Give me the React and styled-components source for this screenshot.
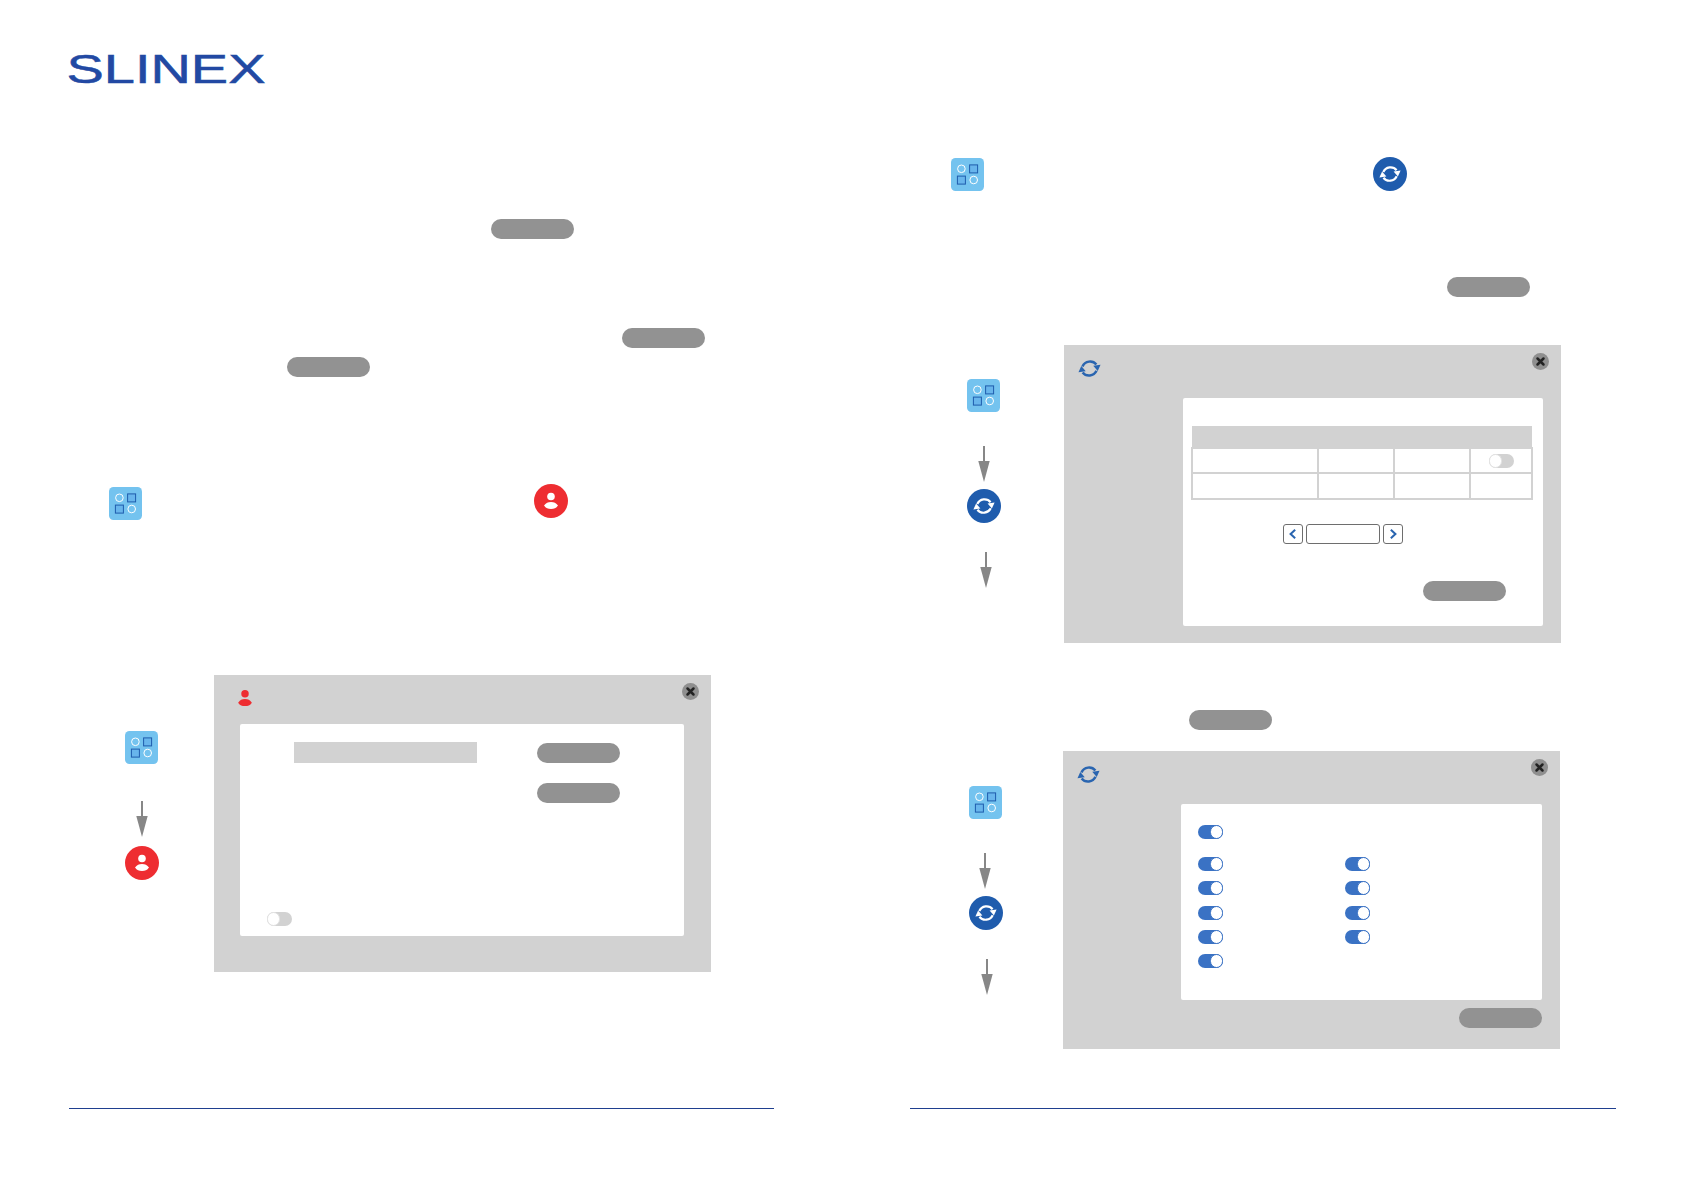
import React from 'react'
import styled, { createGlobalStyle } from 'styled-components'

const GlobalStyle = createGlobalStyle`
  html, body {
    margin: 0;
    background: #fff;
    font-family: 'Liberation Sans', Arial, sans-serif;
  }
`

const AppsIcon = ({ top = 0 }) => (
  <AppsSvg viewBox="0 0 33 33" $top={top}>
    <rect width="33" height="33" rx="4.5" fill="#74c3ef" />
    <circle cx="10.4" cy="10.8" r="3.8" fill="none" stroke="#fff" strokeWidth="1" />
    <rect x="18.6" y="6.9" width="8" height="8" fill="#68b5ec" stroke="#1f5cad" strokeWidth="1" />
    <rect x="6.4" y="18.1" width="8" height="8" fill="#68b5ec" stroke="#1f5cad" strokeWidth="1" />
    <circle cx="22.7" cy="22" r="3.8" fill="none" stroke="#fff" strokeWidth="1" />
  </AppsSvg>
)

const Person = ({ color }) => (
  <>
    <circle cx="17" cy="12.5" r="3.8" fill={color} />
    <path d="M10 21.6 C11.8 18.8 14 17.9 17 17.9 C20 17.9 22.2 18.8 24 21.6 C22.2 24.3 20 25 17 25 C14 25 11.8 24.3 10 21.6 Z" fill={color} />
  </>
)

const UserBadge = () => (
  <RoundSvg viewBox="0 0 34 34">
    <circle cx="17" cy="17" r="17" fill="#ee2d31" />
    <Person color="#fff" />
  </RoundSvg>
)

const syncArcs = (color, width) => (
  <>
    <path d="M5.3 10 A7.9 7.9 0 0 1 18.6 8.2" fill="none" stroke={color} strokeWidth={width} />
    <path d="M15.6 9.4 L22.6 8.4 L19.9 14.4 Z" fill={color} />
    <path d="M18.7 14.2 A7.9 7.9 0 0 1 5.4 15.8" fill="none" stroke={color} strokeWidth={width} />
    <path d="M8.4 14.6 L1.4 15.6 L4.1 9.6 Z" fill={color} />
  </>
)

const SyncBadge = () => (
  <RoundSvg viewBox="0 0 34 34">
    <circle cx="17" cy="17" r="17" fill="#1f5cad" />
    <g transform="translate(5 5)">{syncArcs('#fff', 2.2)}</g>
  </RoundSvg>
)

const SyncMark = () => (
  <SyncSvg viewBox="0 0 24 24">{syncArcs('#2a65b0', 2.4)}</SyncSvg>
)

const UserMark = () => (
  <UserSvg viewBox="10 8.7 14 16.3">
    <Person color="#ee2d31" />
  </UserSvg>
)

const CloseButton = ({ top, right }) => (
  <CloseSvg viewBox="0 0 17 17" $top={top} $right={right}>
    <circle cx="8.5" cy="8.5" r="8.5" fill="#8f8f8f" />
    <path d="M5.5 5.5 L11.5 11.5 M11.5 5.5 L5.5 11.5" stroke="#222" strokeWidth="2.5" strokeLinecap="round" />
  </CloseSvg>
)

const Arrow = ({ top, left }) => (
  <ArrowSvg viewBox="0 0 12 36" $top={top} $left={left}>
    <path d="M6 0 V16" stroke="#878787" strokeWidth="2" />
    <path d="M0.3 15 H11.7 L6 36 Z" fill="#878787" />
  </ArrowSvg>
)

const Chevron = ({ d }) => (
  <ChevronSvg viewBox="0 0 10 10">
    <path d={d} fill="none" stroke="#2a65b0" strokeWidth="1.7" />
  </ChevronSvg>
)

const App = () => (
  <>
    <GlobalStyle />
    <Sheet>
      <Page>
        <LogoMark viewBox="0 0 197 30">
          <LogoText x="-1.5" y="29" textLength="199" lengthAdjust="spacingAndGlyphs">SLINEX</LogoText>
        </LogoMark>

        <Pill $top={135} $left={491} />
        <Pill $top={89} $left={622} />
        <Pill $top={9} $left={287} />

        <IconRow $top={107} $left={109} $gap={392}>
          <AppsIcon top={3} />
          <UserBadge />
        </IconRow>

        <Figure $top={155}>
          <SideSteps $left={125} $top={56}>
            <AppsIcon />
            <Arrow top={37} left={11} />
            <StepBadge $top={9}><UserBadge /></StepBadge>
          </SideSteps>
          <Dialog $left={55} $height={297}>
            <DialogHead $height={49} $left={24} $top={15}>
              <UserMark />
              <CloseButton top={8} right={12} />
            </DialogHead>
            <DialogBody $left={26} $width={444} $height={212}>
              <AccountRow>
                <AccountField />
                <PillStack>
                  <Pill />
                  <Pill />
                </PillStack>
              </AccountRow>
              <BottomToggle>
                <Toggle />
              </BottomToggle>
            </DialogBody>
          </Dialog>
        </Figure>

        <FooterRule $left={69} $width={705} />
      </Page>

      <Page>
        <IconRow $top={103} $left={109} $gap={389}>
          <AppsIcon top={1} />
          <SyncBadge />
        </IconRow>

        <Pill $top={86} $left={605} />

        <Figure $top={48}>
          <SideSteps $left={125} $top={34}>
            <AppsIcon />
            <Arrow top={34} left={11} />
            <StepBadge $top={7}><SyncBadge /></StepBadge>
            <Arrow top={29} left={12.5} />
          </SideSteps>
          <Dialog $left={63} $height={298}>
            <DialogHead $height={53} $left={13} $top={11}>
              <SyncMark />
              <CloseButton top={8} right={12} />
            </DialogHead>
            <DialogBody $left={119} $width={360} $height={228}>
              <Schedule>
                <colgroup>
                  <ScheduleCol $width={126} />
                  <ScheduleCol $width={76} />
                  <ScheduleCol $width={76} />
                  <ScheduleCol $width={62} />
                </colgroup>
                <thead>
                  <tr><th colSpan="4" /></tr>
                </thead>
                <tbody>
                  <tr>
                    <td />
                    <td />
                    <td />
                    <ToggleCell><Toggle /></ToggleCell>
                  </tr>
                  <LastRow>
                    <td />
                    <td />
                    <td />
                    <td />
                  </LastRow>
                </tbody>
              </Schedule>
              <Pager>
                <PagerButton><Chevron d="M6.8 1.5 L3 5 L6.8 8.5" /></PagerButton>
                <PagerField />
                <PagerButton><Chevron d="M3.2 1.5 L7 5 L3.2 8.5" /></PagerButton>
              </Pager>
              <Pill $top={37} $left={240} />
            </DialogBody>
          </Dialog>
        </Figure>

        <Pill $top={67} $left={347} />

        <Figure $top={21}>
          <SideSteps $left={127} $top={35}>
            <AppsIcon />
            <Arrow top={34} left={10} />
            <StepBadge $top={7}><SyncBadge /></StepBadge>
            <Arrow top={29} left={12} />
          </SideSteps>
          <Dialog $left={60} $height={298}>
            <DialogHead $height={53} $left={13} $top={11}>
              <SyncMark />
              <CloseButton top={8} right={12} />
            </DialogHead>
            <DialogBody $left={118} $width={361} $height={196}>
              <MasterToggle>
                <Toggle $on />
              </MasterToggle>
              <ToggleGrid>
                {Array.from({ length: 9 }).map((_, i) => <Toggle $on key={i} />)}
              </ToggleGrid>
            </DialogBody>
            <DialogActions>
              <Pill />
            </DialogActions>
          </Dialog>
        </Figure>

        <FooterRule $left={68} $width={706} />
      </Page>
    </Sheet>
  </>
)

const Sheet = styled.div`
  display: flex;
  width: 1684px;
  height: 1191px;
  overflow: hidden;
  background: #fff;
`

const Page = styled.section`
  display: flex;
  flex-direction: column;
  align-items: flex-start;
  width: 842px;
  height: 1191px;
  padding-top: 54px;
  box-sizing: border-box;
`

const LogoMark = styled.svg`
  display: block;
  flex: none;
  width: 197px;
  height: 30px;
  margin-left: 68px;
  overflow: visible;
`

const LogoText = styled.text`
  font-family: 'Liberation Sans', Arial, sans-serif;
  font-size: 40px;
  fill: #2249a3;
  stroke: #2249a3;
  stroke-width: 0.5px;
`

const Pill = styled.div`
  flex: none;
  width: 83px;
  height: 20px;
  margin-top: ${p => p.$top || 0}px;
  margin-left: ${p => p.$left || 0}px;
  border-radius: 10px;
  background: #929292;
`

const IconRow = styled.div`
  display: flex;
  align-items: flex-start;
  gap: ${p => p.$gap}px;
  margin-top: ${p => p.$top}px;
  margin-left: ${p => p.$left}px;
`

const AppsSvg = styled.svg`
  display: block;
  flex: none;
  width: 33px;
  height: 33px;
  margin-top: ${p => p.$top}px;
`

const RoundSvg = styled.svg`
  display: block;
  flex: none;
  width: 34px;
  height: 34px;
`

const SyncSvg = styled.svg`
  display: block;
  width: 25px;
  height: 25px;
`

const UserSvg = styled.svg`
  display: block;
  width: 14px;
  height: 16px;
`

const CloseSvg = styled.svg`
  position: absolute;
  top: ${p => p.$top}px;
  right: ${p => p.$right}px;
  width: 17px;
  height: 17px;
`

const ArrowSvg = styled.svg`
  display: block;
  flex: none;
  width: 12px;
  height: 36px;
  margin-top: ${p => p.$top}px;
  margin-left: ${p => p.$left}px;
`

const ChevronSvg = styled.svg`
  display: block;
  width: 12px;
  height: 12px;
`

const Figure = styled.div`
  display: flex;
  align-items: flex-start;
  margin-top: ${p => p.$top}px;
`

const SideSteps = styled.div`
  display: flex;
  flex-direction: column;
  width: 34px;
  margin-left: ${p => p.$left}px;
  padding-top: ${p => p.$top}px;
`

const StepBadge = styled.div`
  margin-top: ${p => p.$top}px;
`

const Dialog = styled.div`
  width: 497px;
  height: ${p => p.$height}px;
  margin-left: ${p => p.$left}px;
  background: #d2d2d2;
`

const DialogHead = styled.div`
  position: relative;
  height: ${p => p.$height}px;
  padding-left: ${p => p.$left}px;
  padding-top: ${p => p.$top}px;
  box-sizing: border-box;
`

const DialogBody = styled.div`
  display: flex;
  flex-direction: column;
  align-items: flex-start;
  width: ${p => p.$width}px;
  height: ${p => p.$height}px;
  margin-left: ${p => p.$left}px;
  border-radius: 2px;
  background: #fff;
`

const DialogActions = styled.div`
  display: flex;
  justify-content: flex-end;
  margin: 8px 18px 0 0;
`

const AccountRow = styled.div`
  display: flex;
  align-items: flex-start;
  padding: 18px 0 0 54px;
`

const AccountField = styled.div`
  width: 183px;
  height: 21px;
  background: #d2d2d2;
`

const PillStack = styled.div`
  display: flex;
  flex-direction: column;
  gap: 20px;
  margin: 1px 0 0 60px;
`

const BottomToggle = styled.div`
  margin: auto 0 10px 27px;
`

const Toggle = styled.span`
  position: relative;
  display: block;
  width: 25px;
  height: 14px;
  border-radius: 7px;
  background: ${p => (p.$on ? '#3a72c4' : '#d2d2d2')};

  &::after {
    content: '';
    position: absolute;
    top: 0;
    left: ${p => (p.$on ? '12px' : '0')};
    width: 13px;
    height: 14px;
    box-sizing: border-box;
    border: 1px solid ${p => (p.$on ? '#3a72c4' : '#e2e2e2')};
    border-radius: 7px;
    background: #fff;
  }
`

const Schedule = styled.table`
  width: 340px;
  margin: 28px 0 0 8px;
  table-layout: fixed;
  border-collapse: collapse;

  th {
    height: 21px;
    padding: 0;
    background: #d2d2d2;
  }

  td {
    height: 23px;
    padding: 0;
    border: 2px solid #d2d2d2;
  }
`

const LastRow = styled.tr`
  td {
    height: 24px;
  }
`

const ScheduleCol = styled.col`
  width: ${p => p.$width}px;
`

const ToggleCell = styled.td`
  ${Toggle} {
    margin: 0 auto;
  }
`

const Pager = styled.div`
  display: flex;
  gap: 3px;
  margin: 24px 0 0 100px;
`

const PagerButton = styled.div`
  display: flex;
  align-items: center;
  justify-content: center;
  width: 20px;
  height: 20px;
  box-sizing: border-box;
  border: 1px solid #6e6e6e;
  border-radius: 3px;
`

const PagerField = styled.div`
  width: 74px;
  height: 20px;
  box-sizing: border-box;
  border: 1px solid #6e6e6e;
  border-radius: 3px;
`

const MasterToggle = styled.div`
  margin: 21px 0 0 17px;
`

const ToggleGrid = styled.div`
  display: grid;
  grid-auto-flow: column;
  grid-template-rows: repeat(5, 14px);
  grid-template-columns: 147px 25px;
  row-gap: 10.25px;
  margin: 18px 0 0 17px;
`

const FooterRule = styled.div`
  flex: none;
  width: ${p => p.$width}px;
  height: 1px;
  margin: auto 0 82px ${p => p.$left}px;
  background: #1f3f8f;
`

export default App
